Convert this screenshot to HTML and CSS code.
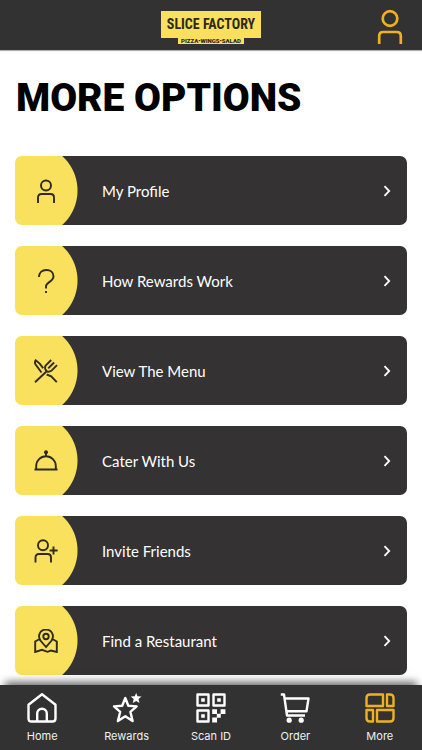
FILE: index.html
```html
<!DOCTYPE html>
<html lang="en">
<head>
<meta charset="utf-8">
<meta name="viewport" content="width=device-width, initial-scale=1">
<title>Slice Factory – More Options</title>
<link rel="stylesheet" href="styles.css">
</head>
<body>
<header class="header">
  <a class="logo" href="#">
    <span class="logo-name">SLICE FACTORY</span>
    <span class="logo-tag">PIZZA•WINGS•SALAD</span>
  </a>
  <button class="account" type="button" aria-label="Account">
    <svg width="26" height="36" viewBox="0 0 26 36" fill="none" stroke="currentColor" stroke-width="2.7"><circle cx="13" cy="9.5" r="7.3"/><path d="M2.200 35V27q0-4 4-4h13.600q4 0 4 4v8"/></svg>
  </button>
</header>

<main class="main">
  <h1 class="title">MORE OPTIONS</h1>
  <ul class="options">
    <li><a class="card" href="#">
      <span class="card-icon"><svg class="icon" viewBox="0 0 24 24"><circle cx="12" cy="6.500" r="5"/><path d="M4 24V18.500q0-3.500 3.500-3.500h9q3.500 0 3.500 3.500V24"/></svg></span>
      <span class="card-label">My Profile</span>
      <svg class="chevron" viewBox="0 0 8 12"><path d="M1.500 1.200 6.200 6 1.500 10.800"/></svg>
    </a></li>
    <li><a class="card" href="#">
      <span class="card-icon"><svg class="icon" viewBox="0 0 24 24"><path d="M5 8C5 3.700 8 1 12.300 1s7.200 2.600 7.200 6.400c0 5-7.500 5.800-7.500 10v2.100M12 22v2"/></svg></span>
      <span class="card-label">How Rewards Work</span>
      <svg class="chevron" viewBox="0 0 8 12"><path d="M1.500 1.200 6.200 6 1.500 10.800"/></svg>
    </a></li>
    <li><a class="card" href="#">
      <span class="card-icon"><svg class="icon" viewBox="0 0 24 24"><path d="M1 23.200 13.500 11.500M17.200 1 11.500 6.700q-1.200 3 .800 5.200 2.200 1.600 5-.100L23 6.100M20.100 3.500 14.200 9.400M7.500 13.500 1.600 5.500Q.300 3.300 1.700 1.200 5.500 3.500 9.200 9.200M12.700 15.500l4.500 1.800L22.800 23.200"/></svg></span>
      <span class="card-label">View The Menu</span>
      <svg class="chevron" viewBox="0 0 8 12"><path d="M1.500 1.200 6.200 6 1.500 10.800"/></svg>
    </a></li>
    <li><a class="card" href="#">
      <span class="card-icon"><svg class="icon" viewBox="0 0 24 24"><path d="M.500 20.500h23M2.200 20V17a9.800 9.800 0 0 1 19.600 0v3M12 3v4"/><circle class="solid" cx="12" cy="3.200" r="2"/></svg></span>
      <span class="card-label">Cater With Us</span>
      <svg class="chevron" viewBox="0 0 8 12"><path d="M1.500 1.200 6.200 6 1.500 10.800"/></svg>
    </a></li>
    <li><a class="card" href="#">
      <span class="card-icon"><svg class="icon" viewBox="0 0 24 24"><circle cx="9" cy="6.200" r="5"/><path d="M1.500 23.500V18.500q0-3.500 3.500-3.500h8.500q3.500 0 3.500 3.500v5M19.500 7.500v8M15.600 11.500h8"/></svg></span>
      <span class="card-label">Invite Friends</span>
      <svg class="chevron" viewBox="0 0 8 12"><path d="M1.500 1.200 6.200 6 1.500 10.800"/></svg>
    </a></li>
    <li><a class="card" href="#">
      <span class="card-icon"><svg class="icon" viewBox="0 0 24 24"><path d="M12 18 6.400 11.500Q4.600 8.500 5.200 6a7 7 0 0 1 13.600 0q.600 2.500-1.200 5.500ZM4.800 10.500l-3.600 2v10.500L8 20.800l5.500 2 3.500-1.300 5.800 1.500V12.500L19.200 10.500"/><circle cx="12" cy="7.500" r="2.700"/></svg></span>
      <span class="card-label">Find a Restaurant</span>
      <svg class="chevron" viewBox="0 0 8 12"><path d="M1.500 1.200 6.200 6 1.500 10.800"/></svg>
    </a></li>
  </ul>
</main>

<nav class="tabs" aria-label="Main">
  <a class="tab" href="#">
    <svg class="tab-icon" viewBox="0 0 30 30"><path d="M1.500 11.700 15 1.300 28.500 11.700V25.500q0 3-3 3h-21q-3 0-3-3ZM10.200 28V20.500a4.800 4.800 0 0 1 9.600 0V28"/></svg>
    <span>Home</span>
  </a>
  <a class="tab" href="#">
    <svg class="tab-icon" viewBox="0 0 30 30"><path d="M13.300 5 16.300 12.800l8.300.600-6.200 5.400 2.200 9.200-7.300-4.800L5.900 28l2.300-9.200L2 13.400l8.200-.600Z"/><path class="solid-light" d="M24.200 0l1.300 3.300 4 .300-3 2.500 1 3.900-3.300-2.100-3.500 2.100 1-3.900-3-2.500 4-.300Z"/></svg>
    <span>Rewards</span>
  </a>
  <a class="tab" href="#">
    <svg class="tab-icon" viewBox="0 0 30 30"><path d="M1.500 1.500H12.500V12.500H1.500ZM17.500 1.500H28.500V12.500H17.500ZM1.500 17.500H12.500V28.500H1.500Z"/><path class="solid-light" d="M5.200 5.200h3.600v3.600H5.200ZM21.200 5.200h3.600v3.600H21.200ZM5.200 21.200h3.600v3.600H5.200ZM16.200 16.200H21V21h-4.800ZM24.600 16.200h4.800V21h-4.800ZM20.800 20.800h4v4h-4ZM16.200 24.600H21v4.800h-4.800Z"/></svg>
    <span>Scan ID</span>
  </a>
  <a class="tab" href="#">
    <svg class="tab-icon" viewBox="0 0 30 30"><path d="M.800 1.500H4L7 22.500H25M4.800 5.500H28.500L26.500 18.200H6.500"/><circle class="solid-light" cx="9.200" cy="27.200" r="2.600"/><circle class="solid-light" cx="21.200" cy="27.200" r="2.600"/></svg>
    <span>Order</span>
  </a>
  <a class="tab" href="#" aria-current="page">
    <svg class="tab-icon tab-icon-active" viewBox="0 0 30 30"><path d="M5 1.500H18V13H1.500V5Q1.500 1.500 5 1.500ZM22 1.500h3q3.500 0 3.500 3.500v8H22ZM1.500 17H8V28.500H5q-3.500 0-3.500-3.500ZM12 17H28.500v8q0 3.500-3.500 3.500H12Z"/></svg>
    <span>More</span>
  </a>
</nav>
</body>
</html>
```
FILE: styles.css
```css
* {
  box-sizing: border-box;
}

body {
  margin: 0;
  min-height: 100vh;
  display: flex;
  flex-direction: column;
  background: #fff;
  color: #000;
  font-family: Lato, "Liberation Sans", sans-serif;
}

a {
  color: inherit;
  text-decoration: none;
}

.header {
  display: grid;
  grid-template-columns: 1fr auto 1fr;
  align-items: center;
  height: 50px;
  padding: 0 19px;
  background: #323232;
  box-shadow: 0 1px 1px rgba(0, 0, 0, 0.3);
}

.logo {
  grid-column: 2;
  display: flex;
  flex-direction: column;
  align-items: center;
  margin-top: 4px;
  color: #2b2a22;
}

.logo-name {
  padding: 0 6px;
  background: #fae05c;
  font: 700 14px/27px "Roboto Condensed", Roboto, sans-serif;
}

.logo-tag {
  padding: 0 3px;
  background: #fae05c;
  font: 900 6px/6px Roboto, sans-serif;
}

.account {
  justify-self: end;
  display: flex;
  margin-top: 4px;
  padding: 0;
  border: 0;
  background: none;
  color: #efb120;
}

.main {
  flex: 1;
  padding: 24px 15px 10px;
}

.title {
  margin: 0 0 34px;
  padding-left: 1px;
  font: 900 39px/48px Roboto, sans-serif;
}

.options {
  display: grid;
  gap: 21px;
  margin: 0;
  padding: 0;
  list-style: none;
}

.card {
  display: flex;
  align-items: center;
  height: 69px;
  padding-right: 16px;
  border-radius: 7px;
  background: #343233 radial-gradient(circle at 16px 50%, #f9e05d 46px, transparent 47px);
  color: #fff;
}

.card-icon {
  display: flex;
  justify-content: center;
  width: 62px;
}

.icon {
  width: 24px;
  height: 24px;
  fill: none;
  stroke: #2e2b1d;
  stroke-width: 1.9;
}

.solid {
  fill: #2e2b1d;
  stroke: none;
}

.card-label {
  flex: 1;
  padding-left: 25px;
  font-size: 15px;
  line-height: 24px;
}

.chevron {
  width: 8px;
  height: 12px;
  fill: none;
  stroke: #fff;
  stroke-width: 1.8;
}

.tabs {
  position: sticky;
  bottom: 0;
  display: grid;
  grid-template-columns: repeat(5, 1fr);
  height: 65px;
  padding-top: 8px;
  background: #323232;
  box-shadow: 0 -8px 8px -5px rgba(0, 0, 0, 0.6);
}

.tab {
  display: flex;
  flex-direction: column;
  align-items: center;
  gap: 5px;
  color: #f0f0f0;
  font: 400 11px/16px Inter, sans-serif;
}

.tab-icon {
  width: 30px;
  height: 30px;
  fill: none;
  stroke: #fff;
  stroke-width: 2.4;
  stroke-linejoin: round;
}

.tab-icon-active {
  stroke: #efb120;
}

.solid-light {
  fill: #fff;
  stroke: none;
}
```
